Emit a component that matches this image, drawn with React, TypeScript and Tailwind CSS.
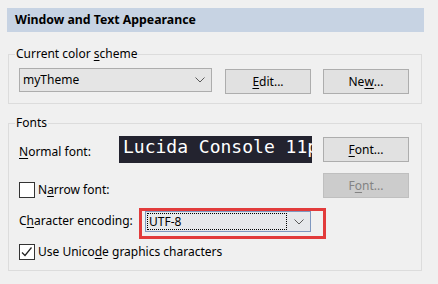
import type { ReactNode } from 'react';

function U({ children }: { children: ReactNode }) {
  return <span className="underline decoration-1 underline-offset-2">{children}</span>;
}

function Chevron() {
  return (
    <svg width="10" height="6" viewBox="0 0 10 6" fill="none">
      <polyline points="0.5,0.5 5,5 9.5,0.5" stroke="#5a5a5a" strokeWidth="1" />
    </svg>
  );
}

function Button({ children, disabled }: { children: ReactNode; disabled?: boolean }) {
  return (
    <div
      className={`flex h-[25px] w-[86px] shrink-0 items-center justify-center border leading-[16px] ${
        disabled
          ? 'border-[#bfbfbf] bg-[#cccccc] text-[#838383]'
          : 'border-[#adadad] bg-[#e1e1e1] text-black'
      }`}
    >
      {children}
    </div>
  );
}

function CheckBox({ checked }: { checked?: boolean }) {
  return (
    <div className="flex h-[16px] w-[16px] shrink-0 items-center justify-center border border-[#333333] bg-white">
      {checked ? (
        <svg width="14" height="14" viewBox="0 0 14 14" fill="none">
          <polyline points="2,7.5 5,10.5 11.5,2.5" stroke="#222222" strokeWidth="1.2" />
        </svg>
      ) : null}
    </div>
  );
}

export default function App() {
  return (
    <div className="h-[284px] w-[438px] overflow-hidden bg-[#f0f0f0] pl-[7px] pt-[8px] font-['Noto_Sans',sans-serif] text-[12px] text-black">
      <div className="h-[24px] w-[417px] bg-[#c7d3e3] pl-[8px] text-[12.3px] font-bold leading-[24px]">
        Window and Text Appearance
      </div>

      <fieldset className="ml-[1px] mt-[14px] w-[414px] border border-[#dcdcdc]">
        <legend className="ml-[6px] px-[1px] leading-[16px]">
          Current color <U>s</U>cheme
        </legend>
        <div className="flex items-start pb-[9px] pl-[10px] pt-[6px]">
          <div className="flex h-[24px] w-[193px] items-center justify-between border border-[#adadad] bg-[#e5e5e5] pl-[3px] pr-[6px] leading-[16px]">
            <span>myTheme</span>
            <Chevron />
          </div>
          <div className="ml-[13px] mt-[1px]">
            <Button>
              <U>E</U>dit...
            </Button>
          </div>
          <div className="ml-[12px] mt-[1px]">
            <Button>
              Ne<U>w</U>...
            </Button>
          </div>
        </div>
      </fieldset>

      <fieldset className="ml-[1px] mt-[11px] w-[414px] border border-[#dcdcdc]">
        <legend className="ml-[6px] px-[1px] leading-[16px]">Fonts</legend>
        <div className="flex flex-col pb-[10px] pl-[10px] pt-[5px]">
          <div className="flex h-[27px] items-start">
            <div className="w-[100px] shrink-0 pt-[8px] leading-[16px]">
              <U>N</U>ormal font:
            </div>
            <div className="h-[27px] w-[193px] shrink-0 overflow-hidden whitespace-nowrap bg-[#23232f] pl-[4px] font-['DejaVu_Sans_Mono',monospace] text-[18px] leading-[22px] text-white">
              Lucida Console 11pt
            </div>
            <div className="ml-[11px] mt-[1px]">
              <Button>
                <U>F</U>ont...
              </Button>
            </div>
          </div>

          <div className="mt-[10px] flex h-[25px] items-start">
            <div className="flex w-[304px] shrink-0 items-start pt-[9px]">
              <CheckBox />
              <span className="ml-[3px] leading-[16px]">
                N<U>a</U>rrow font:
              </span>
            </div>
            <Button disabled>
              F<U>o</U>nt...
            </Button>
          </div>

          <div className="mt-[10px] flex items-start">
            <div className="w-[120px] shrink-0 pt-[5px] leading-[16px]">
              C<U>h</U>aracter encoding:
            </div>
            <div className="h-[31px] w-[187px] border-[3px] border-[#e23b3b] pl-[3px]">
              <div className="flex h-[21px] w-[166px] border border-[#7f97bf] bg-[#e6e8eb]">
                <div className="ml-[1px] mt-[1px] h-[17px] w-[140px] border border-dotted border-black pl-[1px] leading-[15px]">
                  UTF-8
                </div>
                <div className="flex flex-1 items-center justify-center">
                  <Chevron />
                </div>
              </div>
            </div>
          </div>

          <div className="mt-[5px] flex items-start">
            <CheckBox checked />
            <span className="ml-[3px] leading-[16px]">
              Use Unico<U>d</U>e graphics characters
            </span>
          </div>
        </div>
      </fieldset>
    </div>
  );
}
